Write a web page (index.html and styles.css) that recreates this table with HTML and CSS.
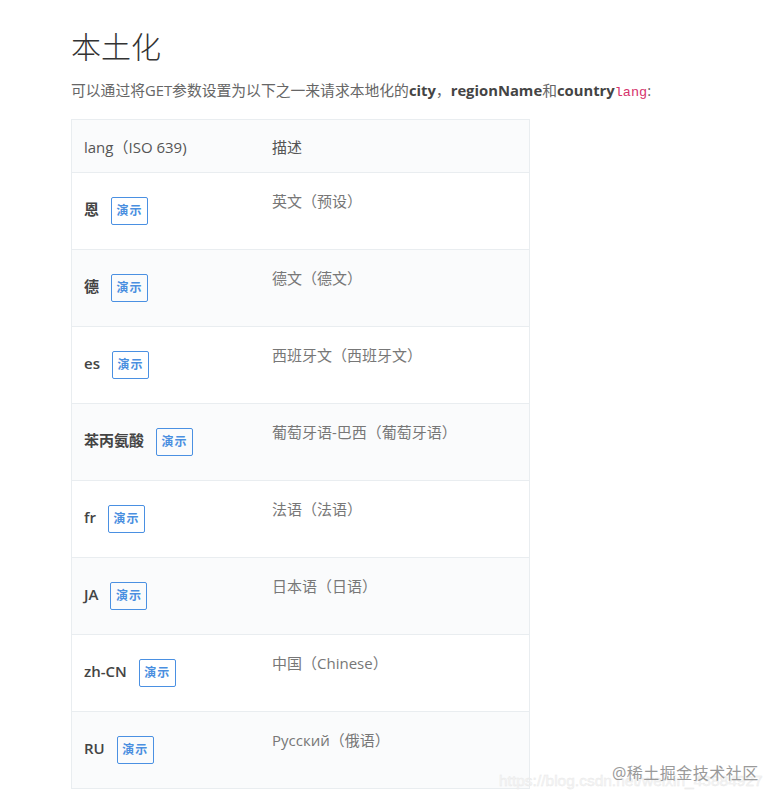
FILE: index.html
```html
<!DOCTYPE html>
<html lang="zh">
<head>
<meta charset="utf-8">
<link rel="stylesheet" href="styles.css">
</head>
<body>
<div class="page">
  <h1 class="title">本土化</h1>
  <p class="intro">可以通过将GET参数设置为以下之一来请求本地化的<b>city</b>，<b>regionName</b>和<b>country</b><code>lang</code>:</p>
  <table class="langs">
    <thead>
      <tr><th class="c1">lang（ISO 639)</th><th class="c2">描述</th></tr>
    </thead>
    <tbody>
      <tr><td class="c1"><div class="code"><b>恩</b><span class="demo">演示</span></div></td><td class="c2">英文（预设）</td></tr>
      <tr class="alt"><td class="c1"><div class="code"><b>德</b><span class="demo">演示</span></div></td><td class="c2">德文（德文）</td></tr>
      <tr><td class="c1"><div class="code"><b>es</b><span class="demo">演示</span></div></td><td class="c2">西班牙文（西班牙文）</td></tr>
      <tr class="alt"><td class="c1"><div class="code"><b>苯丙氨酸</b><span class="demo">演示</span></div></td><td class="c2">葡萄牙语-巴西（葡萄牙语）</td></tr>
      <tr><td class="c1"><div class="code"><b>fr</b><span class="demo">演示</span></div></td><td class="c2">法语（法语）</td></tr>
      <tr class="alt"><td class="c1"><div class="code"><b>JA</b><span class="demo">演示</span></div></td><td class="c2">日本语（日语）</td></tr>
      <tr><td class="c1"><div class="code"><b>zh-CN</b><span class="demo">演示</span></div></td><td class="c2">中国（Chinese）</td></tr>
      <tr class="alt"><td class="c1"><div class="code"><b>RU</b><span class="demo">演示</span></div></td><td class="c2">Русский（俄语）</td></tr>
    </tbody>
  </table>
</div>
<div class="wm-url">https://blog.csdn.net/weixin_43884927</div>
<div class="wm">@稀土掘金技术社区</div>
</body>
</html>
```

FILE: styles.css
```css
html, body {
  margin: 0;
  padding: 0;
  background: #ffffff;
}
body {
  font-family: "Open Sans", "Noto Sans CJK SC", sans-serif;
  color: #555;
  width: 781px;
  height: 802px;
  overflow: hidden;
  position: relative;
}
.page {
  padding: 26px 0 0 71px;
}
.title {
  margin: 0;
  font-size: 30px;
  font-weight: 300;
  line-height: 42px;
  color: #333;
}
.intro {
  margin: 12px 0 0 0;
  font-size: 14.8px;
  line-height: 20px;
  color: #666;
}
.intro b {
  color: #444;
  font-weight: 700;
}
.intro code {
  font-family: "Liberation Mono", "DejaVu Sans Mono", monospace;
  font-size: 13.5px;
  color: #d6336c;
}
.langs {
  margin-top: 16px;
  width: 459px;
  border-collapse: collapse;
  border: 1px solid #e9edf0;
  font-size: 15px;
}
.langs th, .langs td {
  text-align: left;
  vertical-align: top;
  padding: 0 12px;
  border-bottom: 1px solid #e9edf0;
}
.langs thead tr {
  height: 53px;
}
.langs tbody tr {
  height: 77px;
}
.langs th {
  font-weight: 400;
  color: #555;
  vertical-align: middle;
  background: #fafbfc;
}
.langs th.c1 {
  width: 164px;
}
.langs td {
  color: #777;
}
.langs td.c2 {
  padding-top: 18px;
  line-height: 20px;
}
.langs tr.alt td {
  background: #fafbfc;
}
.code {
  display: flex;
  align-items: baseline;
  padding-top: 24px;
}
.code b {
  font-weight: 600;
  color: #444;
}
.demo {
  display: inline-block;
  margin-left: 12px;
  width: 35px;
  height: 26px;
  line-height: 26px;
  text-align: center;
  border: 1px solid #4a90e2;
  border-radius: 2px;
  color: #4a8fe0;
  font-size: 12px;
  font-weight: 700;
  letter-spacing: 1px;
}
.wm-url {
  position: absolute;
  left: 499px;
  top: 772px;
  font-family: "Liberation Sans", sans-serif;
  font-size: 15.5px;
  color: #f6f6f6;
  -webkit-text-stroke: 0.4px #e8e8e8;
  white-space: nowrap;
}
.wm {
  position: absolute;
  left: 612px;
  top: 760px;
  font-size: 16px;
  color: #9a9a9a;
  letter-spacing: 0.5px;
  white-space: nowrap;
}
```
